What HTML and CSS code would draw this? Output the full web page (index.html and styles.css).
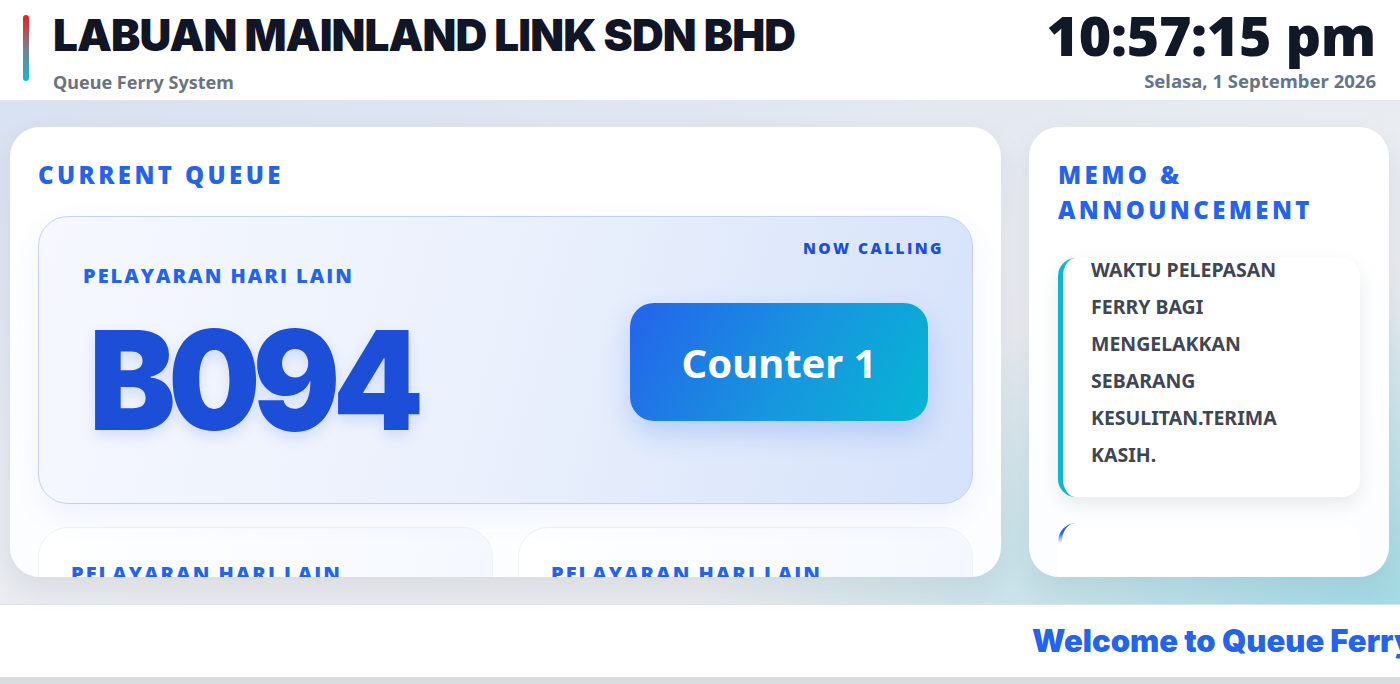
FILE: index.html
```html
<!DOCTYPE html>
<html lang="ms">
<head>
<meta charset="utf-8">
<title>Queue Ferry System</title>
<link rel="stylesheet" href="styles.css">
</head>
<body>
<div class="page">
  <header class="topbar">
    <div class="brand">
      <span class="brand-accent"></span>
      <div class="brand-text">
        <h1 class="brand-title">LABUAN MAINLAND LINK SDN BHD</h1>
        <div class="brand-sub">Queue Ferry System</div>
      </div>
    </div>
    <div class="clock">
      <div class="clock-time">10:57:15 pm</div>
      <div class="clock-date">Selasa, 1 September 2026</div>
    </div>
  </header>

  <main class="board">
    <section class="card queue-card">
      <h2 class="section-title">CURRENT QUEUE</h2>
      <div class="now-card">
        <span class="now-label">NOW CALLING</span>
        <div class="now-left">
          <div class="service-label">PELAYARAN HARI LAIN</div>
          <div class="ticket">B094</div>
        </div>
        <div class="counter-pill">Counter 1</div>
      </div>
      <div class="next-grid">
        <div class="next-card"><div class="service-label">PELAYARAN HARI LAIN</div></div>
        <div class="next-card"><div class="service-label">PELAYARAN HARI LAIN</div></div>
      </div>
    </section>

    <aside class="card memo-card">
      <h2 class="section-title memo-title">MEMO &amp; ANNOUNCEMENT</h2>
      <div class="memo-list">
        <div class="memo-item cyan"><div class="memo-text">WAKTU PELEPASAN FERRY BAGI MENGELAKKAN SEBARANG KESULITAN.TERIMA KASIH.</div></div>
        <div class="memo-item blue"></div>
      </div>
    </aside>
  </main>

  <footer class="ticker">
    <div class="ticker-text">Welcome to Queue Ferry System</div>
  </footer>
</div>
</body>
</html>
```

FILE: styles.css
```css
* { box-sizing: border-box; }
html, body { margin: 0; padding: 0; }
body {
  width: 1400px;
  height: 684px;
  overflow: hidden;
  background: #d9dde2;
  font-family: "Noto Sans", "Open Sans", sans-serif;
}
.page { width: 1400px; }

/* header */
.topbar {
  height: 101px;
  background: #ffffff;
  border-bottom: 1px solid #e3e6ea;
  display: flex;
  justify-content: space-between;
  align-items: flex-start;
  padding: 0 24px 0 23px;
}
.brand { display: flex; gap: 24px; padding-top: 15px; }
.brand-accent {
  width: 6px;
  height: 66px;
  border-radius: 3px;
  background: linear-gradient(180deg, #ef1d1d 0%, #7a7f8a 50%, #14b8d0 100%);
}
.brand-text { margin-top: -6px; }
.brand-title {
  margin: 0;
  font-family: "Inter", sans-serif;
  font-weight: 900;
  font-size: 44px;
  line-height: 52px;
  letter-spacing: -0.9px;
  color: #111526;
}
.brand-sub {
  margin-top: 9px;
  font-weight: 700;
  font-size: 18px;
  line-height: 24px;
  color: #6b7280;
}
.clock { text-align: right; padding-top: 4px; }
.clock-time {
  font-family: "Open Sans", sans-serif;
  font-weight: 800;
  font-size: 55.5px;
  line-height: 62px;
  letter-spacing: -0.3px;
  color: #111827;
}
.clock-date {
  margin-top: 4px;
  font-weight: 700;
  font-size: 18.5px;
  line-height: 22px;
  color: #64748b;
}

/* board */
.board {
  height: 503px;
  padding: 26px 11px 27px 10px;
  display: grid;
  grid-template-columns: 991px 360px;
  column-gap: 28px;
  background:
    radial-gradient(ellipse 700px 320px at 100% 100%, rgba(150, 215, 225, 0.85), rgba(150, 215, 225, 0) 100%),
    linear-gradient(165deg, #d8e1f2 0%, #e9ecf1 45%, #e8eaed 100%);
}
.card {
  background: linear-gradient(180deg, #ffffff 0%, #fcfdfe 100%);
  border-radius: 30px;
  box-shadow: 0 12px 30px rgba(30, 41, 59, 0.08);
  overflow: hidden;
}
.section-title {
  margin: 0;
  font-family: "Open Sans", sans-serif;
  font-weight: 800;
  font-size: 24px;
  line-height: 35px;
  letter-spacing: 3.4px;
  color: #2563eb;
}

.queue-card { padding: 30px 28px 0 28px; }
.now-card {
  position: relative;
  margin-top: 24px;
  height: 288px;
  border: 1px solid #bfd2f4;
  border-radius: 30px;
  background: linear-gradient(105deg, #f6f8fe 0%, #eaf0fc 50%, #d5e2fa 100%);
  box-shadow: 0 12px 30px rgba(37, 99, 235, 0.07);
  display: flex;
  align-items: center;
  justify-content: space-between;
  padding: 0 44px 0 44px;
}
.now-label {
  position: absolute;
  top: 20px;
  right: 28px;
  font-family: "Open Sans", sans-serif;
  font-weight: 800;
  font-size: 15.5px;
  letter-spacing: 2.4px;
  color: #1d4ed8;
}
.now-left { align-self: flex-start; padding-top: 45px; }
.service-label {
  font-family: "Open Sans", sans-serif;
  font-weight: 800;
  font-size: 20px;
  line-height: 28px;
  letter-spacing: 2px;
  color: #2563eb;
}
.ticket {
  margin-top: 20px;
  margin-left: 6px;
  font-family: "Inter", sans-serif;
  font-weight: 900;
  font-size: 138px;
  line-height: 140px;
  letter-spacing: -8px;
  color: #1d4ed8;
  transform: scaleX(0.94);
  transform-origin: 0 50%;
  text-shadow: 0 6px 14px rgba(29, 78, 216, 0.15);
}
.counter-pill {
  width: 298px;
  height: 118px;
  margin-top: 4px;
  border-radius: 24px;
  background: linear-gradient(120deg, #2563eb 0%, #1796de 55%, #06b6d4 100%);
  box-shadow: 0 12px 28px rgba(37, 99, 235, 0.22);
  display: flex;
  align-items: center;
  justify-content: center;
  color: #ffffff;
  font-weight: 700;
  font-size: 40px;
}

.next-grid {
  margin-top: 23px;
  display: grid;
  grid-template-columns: 455px 455px;
  column-gap: 25px;
}
.next-card {
  height: 120px;
  border-radius: 30px;
  border: 1px solid #eef2f8;
  background: linear-gradient(100deg, #ffffff 0%, #f4f8fe 100%);
  padding: 32px 32px;
}

.memo-card { padding: 30px 29px 0 29px; }
.memo-list { margin-top: 31px; display: flex; flex-direction: column; gap: 23px; }
.memo-item {
  position: relative;
  background: #ffffff;
  border-radius: 18px;
  box-shadow: 0 8px 18px rgba(30, 41, 59, 0.09);
  font-weight: 700;
  font-size: 19.5px;
  line-height: 37px;
  color: #3f4654;
}
.memo-item.cyan {
  border-left: 5px solid #0eb6cf;
  padding: 0 20px 24px 28px;
}
.memo-text { margin-top: -7px; }
.memo-item.blue { height: 120px; box-shadow: none; margin-top: 3px; }
.memo-item.blue::before {
  content: "";
  position: absolute;
  left: 0;
  top: 0;
  width: 20px;
  height: 20px;
  border-left: 4px solid #2563eb;
  border-top-left-radius: 18px;
  -webkit-mask: linear-gradient(180deg, #000 0%, #000 50%, transparent 100%);
          mask: linear-gradient(180deg, #000 0%, #000 50%, transparent 100%);
}

/* footer ticker */
.ticker {
  height: 73px;
  background: #ffffff;
  border-top: 1px solid #dfe3e8;
  overflow: hidden;
  white-space: nowrap;
}
.ticker-text {
  padding-left: 1032px;
  font-family: "Inter", sans-serif;
  font-weight: 900;
  font-size: 31px;
  line-height: 72px;
  color: #2563eb;
}
```
